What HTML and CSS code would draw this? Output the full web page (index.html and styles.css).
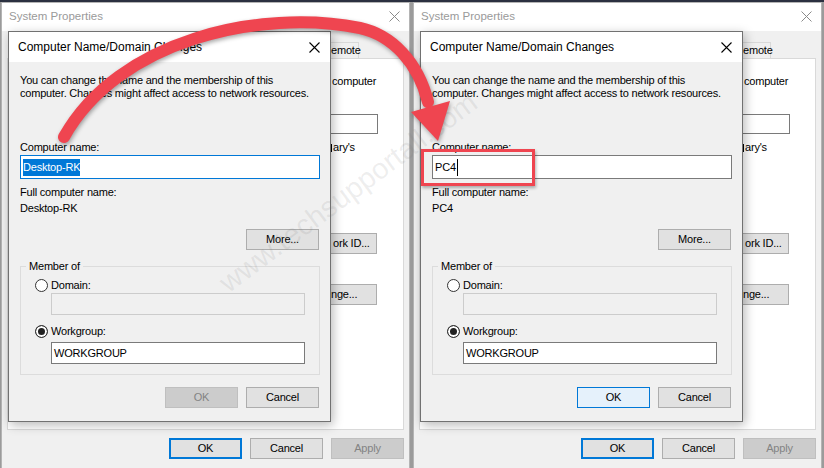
FILE: index.html
```html
<!DOCTYPE html>
<html>

<head>
  <title>Rename this PC - Computer Name/Domain Changes</title>
  <meta charset="utf-8">
  <link rel="stylesheet" href="styles.css">
</head>

<body>

  <div class="page">

    <!-- before: old name selected -->
    <div class="shot">
      <div class="win">
        <div class="win-title">
          <span>System Properties</span>
          <svg class="x-icon" width="11" height="11" viewBox="0 0 11 11"><path d="M0.5 0.5 L10.5 10.5 M10.5 0.5 L0.5 10.5" stroke="#8a8a8a" stroke-width="1" fill="none"/></svg>
        </div>
        <div class="win-body">
          <div class="tabs">
            <span class="tab">emote</span>
          </div>
          <!-- only the right edge of the tab page shows past the dialog -->
          <div class="tab-panel">
            <p class="frag first">computer</p>
            <span class="box short"></span>
            <p class="frag mary">ary's</p>
            <span class="btn cut net">ork ID...</span>
            <span class="btn cut chg">nge...</span>
          </div>
          <div class="win-buttons">
            <span class="btn main">OK</span>
            <span class="btn">Cancel</span>
            <span class="btn off">Apply</span>
          </div>
        </div>
      </div>

      <div class="dlg">
        <div class="dlg-title">
          <span>Computer Name/Domain Changes</span>
          <svg class="x-icon" width="11" height="11" viewBox="0 0 11 11"><path d="M0.5 0.5 L10.5 10.5 M10.5 0.5 L0.5 10.5" stroke="#000" stroke-width="1.1" fill="none"/></svg>
        </div>
        <div class="dlg-body">
          <p>You can change the name and the membership of this<br>computer. Changes might affect access to network resources.</p>
          <p class="name-lbl">Computer name:</p>
          <div class="box field focus"><span class="sel">Desktop-RK</span></div>
          <p class="full-lbl">Full computer name:</p>
          <p class="full-val">Desktop-RK</p>
          <span class="btn more">More...</span>
          <fieldset class="group">
            <legend>Member of</legend>
            <div class="radio-row first"><span class="radio"></span>Domain:</div>
            <div class="box sub off"></div>
            <div class="radio-row"><span class="radio checked"></span>Workgroup:</div>
            <div class="box sub wg">WORKGROUP</div>
          </fieldset>
          <div class="dlg-buttons">
            <span class="btn off">OK</span>
            <span class="btn">Cancel</span>
          </div>
        </div>
      </div>
    </div>

    <!-- after: new name typed -->
    <div class="shot">
      <div class="win">
        <div class="win-title">
          <span>System Properties</span>
          <svg class="x-icon" width="11" height="11" viewBox="0 0 11 11"><path d="M0.5 0.5 L10.5 10.5 M10.5 0.5 L0.5 10.5" stroke="#8a8a8a" stroke-width="1" fill="none"/></svg>
        </div>
        <div class="win-body">
          <div class="tabs">
            <span class="tab">emote</span>
          </div>
          <div class="tab-panel">
            <p class="frag first">computer</p>
            <span class="box short"></span>
            <p class="frag mary">ary's</p>
            <span class="btn cut net">ork ID...</span>
            <span class="btn cut chg">nge...</span>
          </div>
          <div class="win-buttons">
            <span class="btn main">OK</span>
            <span class="btn">Cancel</span>
            <span class="btn off">Apply</span>
          </div>
        </div>
      </div>

      <div class="dlg">
        <div class="dlg-title">
          <span>Computer Name/Domain Changes</span>
          <svg class="x-icon" width="11" height="11" viewBox="0 0 11 11"><path d="M0.5 0.5 L10.5 10.5 M10.5 0.5 L0.5 10.5" stroke="#000" stroke-width="1.1" fill="none"/></svg>
        </div>
        <div class="dlg-body">
          <p>You can change the name and the membership of this<br>computer. Changes might affect access to network resources.</p>
          <p class="name-lbl">Computer name:</p>
          <div class="box field"><span class="caret">PC4</span></div>
          <p class="full-lbl">Full computer name:</p>
          <p class="full-val">PC4</p>
          <span class="btn more">More...</span>
          <fieldset class="group">
            <legend>Member of</legend>
            <div class="radio-row first"><span class="radio"></span>Domain:</div>
            <div class="box sub off"></div>
            <div class="radio-row"><span class="radio checked"></span>Workgroup:</div>
            <div class="box sub wg">WORKGROUP</div>
          </fieldset>
          <div class="dlg-buttons">
            <span class="btn def">OK</span>
            <span class="btn">Cancel</span>
          </div>
        </div>
      </div>
    </div>

    <!-- annotations drawn over both screenshots -->
    <div class="watermark">www.techsupportall.com</div>
    <div class="mark-box"></div>
    <svg class="arrow" width="824" height="468" viewBox="0 0 824 468">
      <path d="M64 137 C118 40, 260 8, 360 28 C392 35, 418 62, 428 102" stroke="#ef4550" stroke-width="12" stroke-linecap="round" fill="none"/>
      <polygon points="438,141 450,101 411,112" fill="#ef4550"/>
    </svg>

  </div>

</body>

</html>
```

FILE: styles.css
```css
* {
  box-sizing: border-box;
}

body {
  margin: 0;
  font-family: "Liberation Sans", Arial, sans-serif;
  font-size: 11px;
  letter-spacing: -0.2px;
  line-height: 13px;
  color: #000;
}

p {
  margin: 0;
  white-space: nowrap;
}

.page {
  position: relative;
  display: flex;
  width: 824px;
  height: 468px;
  overflow: hidden;
}

/* one screenshot of the desktop */
.shot {
  position: relative;
  width: 412px;
  height: 468px;
  padding: 2px 2px 0 1px;
  background: linear-gradient(#2b3040 2px, #9b9b9b 2px);
}

/* System Properties window (inactive) */
.win {
  height: 100%;
  display: flex;
  flex-direction: column;
  background: #f0f0f0;
  border: 1px solid #b4b4b4;
  border-bottom: 0;
  overflow: hidden;
}

.win-title {
  height: 28px;
  flex: none;
  display: flex;
  align-items: center;
  justify-content: space-between;
  padding: 0 9px 2px 7px;
  background: #fff;
  color: #9a9a9a;
  font-size: 11.5px;
  letter-spacing: 0;
}

.win-body {
  flex: 1;
  display: flex;
  flex-direction: column;
  padding: 0 5px;
}

/* tab strip: the dialog hides all but the end of the last tab */
.tabs {
  height: 27px;
  flex: none;
  display: flex;
  align-items: flex-end;
  padding-left: 323px;
}

.tab {
  width: 29px;
  height: 16px;
  padding: 1px 0 0 1px;
  border: 1px solid #d9d9d9;
  border-left: 0;
  border-bottom: 0;
  background: #f0f0f0;
}

.tab-panel {
  height: 372px;
  flex: none;
  display: flex;
  flex-direction: column;
  align-items: flex-start;
  padding: 16px 25px 0 323px;
  background: #fff;
  border: 1px solid #d9d9d9;
}

.frag {
  padding-left: 1px;
}

.box.short {
  width: 47px;
  height: 20px;
  margin-top: 26px;
  border-left: 0;
}

.frag.mary {
  display: flex;
  align-items: center;
  gap: 1px;
  margin-top: 7px;
  padding-left: 0;
}

/* right leg of the hidden "M" */
.frag.mary::before {
  content: "";
  width: 1px;
  height: 8px;
  background: #000;
}

.btn.cut {
  width: 46px;
  justify-content: flex-start;
  border-left: 0;
}

.btn.net {
  margin-top: 79px;
  padding-left: 2px;
}

.btn.chg {
  margin-top: 30px;
  padding-left: 0;
}

.win-buttons {
  display: flex;
  justify-content: flex-end;
  gap: 8px;
  margin-top: 8px;
}

/* Computer Name/Domain Changes dialog, sits over the window */
.dlg {
  position: absolute;
  left: 8px;
  top: 31px;
  width: 323px;
  height: 391px;
  display: flex;
  flex-direction: column;
  background: #f0f0f0;
  border: 1px solid #717171;
  box-shadow: 2px 3px 10px rgba(0, 0, 0, 0.28);
}

.dlg-title {
  height: 30px;
  flex: none;
  display: flex;
  align-items: center;
  justify-content: space-between;
  padding: 0 10px 0 9px;
  background: #fff;
  font-size: 12px;
  letter-spacing: 0;
}

.dlg-body {
  display: flex;
  flex-direction: column;
  padding: 12px 10px 12px 11px;
}

.name-lbl {
  margin-top: 41px;
}

.box {
  display: flex;
  align-items: center;
  padding: 0 2px;
  background: #fff;
  border: 1px solid #7a7a7a;
  white-space: nowrap;
}

.box.field {
  height: 24px;
  margin-top: 1px;
}

.box.focus {
  border-color: #0078d7;
}

.box.off {
  background: #f0f0f0;
  border-color: #cccccc;
}

.sel {
  background: #0078d7;
  color: #fff;
  line-height: 17px;
}

.caret {
  border-right: 1px solid #000;
  line-height: 17px;
  padding-right: 1px;
}

.full-lbl {
  margin-top: 7px;
}

.full-val {
  margin-top: 3px;
}

.btn {
  width: 73px;
  height: 21px;
  display: flex;
  align-items: center;
  justify-content: center;
  flex: none;
  background: #e1e1e1;
  border: 1px solid #adadad;
  white-space: nowrap;
}

.btn.more {
  align-self: flex-end;
  margin-top: 14px;
  margin-right: 1px;
}

.btn.off {
  background: #cccccc;
  border-color: #bfbfbf;
  color: #838383;
}

.btn.def {
  background: #e5f1fb;
  border-color: #0078d7;
}

.btn.main {
  border: 2px solid #0078d7;
}

.group {
  margin: 9px 0 0 0;
  padding: 0 14px 10px 5px;
  border: 1px solid #dcdcdc;
}

.group legend {
  padding: 0 3px;
  line-height: 14px;
}

.radio-row {
  display: flex;
  align-items: center;
  gap: 3px;
  margin-top: 10px;
  margin-left: 9px;
}

.radio-row.first {
  margin-top: 6px;
}

.radio {
  width: 13px;
  height: 13px;
  border: 1px solid #333;
  border-radius: 50%;
  background: #fff;
}

.radio.checked {
  background: #222;
  box-shadow: inset 0 0 0 2px #fff;
}

.box.sub {
  height: 22px;
  margin-left: 25px;
  margin-top: 1px;
}

.box.wg {
  margin-top: 4px;
}

.dlg-buttons {
  display: flex;
  justify-content: flex-end;
  gap: 8px;
  margin-top: 12px;
  margin-right: 1px;
}

/* annotations */
.watermark {
  position: absolute;
  left: 348px;
  top: 192px;
  transform: translate(-50%, -50%) rotate(-36.7deg);
  font-size: 29px;
  letter-spacing: 0;
  line-height: 30px;
  color: rgba(120, 120, 120, 0.13);
  white-space: nowrap;
  pointer-events: none;
}

.mark-box {
  position: absolute;
  left: 421px;
  top: 149px;
  width: 114px;
  height: 37px;
  border: 3px solid #ef4550;
  box-shadow: 1px 2px 3px rgba(0, 0, 0, 0.3);
}

.arrow {
  position: absolute;
  left: 0;
  top: 0;
  filter: drop-shadow(1px 2px 2px rgba(0, 0, 0, 0.35));
  pointer-events: none;
}
```
